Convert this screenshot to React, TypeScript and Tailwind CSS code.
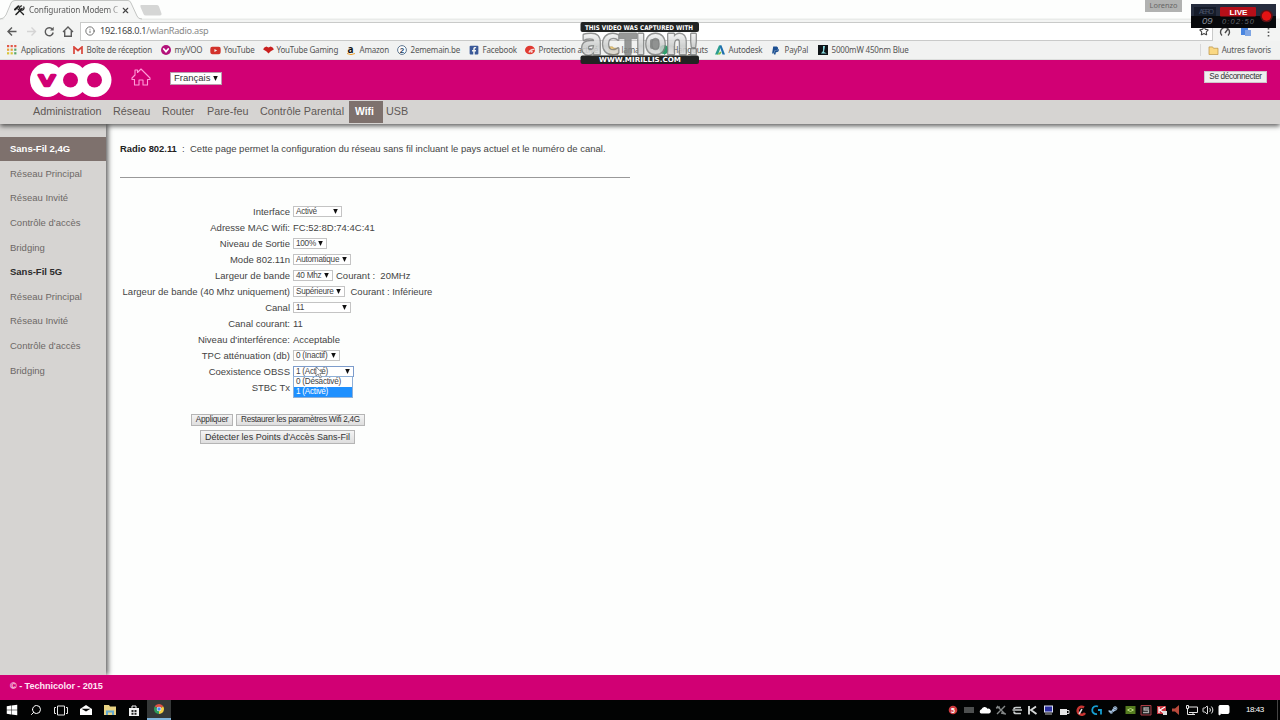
import React from "react";
import {
  FaFacebookSquare,
  FaPaypal,
  FaSteamSymbol,
  FaWindows,
  FaYoutube,
} from "react-icons/fa";
import { Info, MessageSquare, Search, Star, Volume2, X } from "lucide-react";

type SelectProps = {
  value: string;
  className: string;
  active?: boolean;
};

const Select = ({ value, className, active }: SelectProps) => (
  <div
    className={`flex h-[11px] items-center justify-between border bg-white pr-[3px] pl-[2px] text-[8.2px] leading-[9px] tracking-[-0.25px] whitespace-nowrap text-[#444] ${
      active ? "border-[#7d9ccb]" : "border-[#c4c4c4]"
    } ${className}`}
  >
    <span>{value}</span>
    <Arrow />
  </div>
);

const Arrow = () => (
  <svg viewBox="0 0 5 5" className="h-[5px] w-[5px] shrink-0">
    <path d="M0.200 0h4.600L2.500 5z" fill="#111" />
  </svg>
);

const Folder = () => (
  <svg viewBox="0 0 12 10" className="h-[9px] w-[11px] shrink-0">
    <path
      d="M1 1h4l1 1.5h5V9.5H1z"
      fill="#fad883"
      stroke="#b99345"
      strokeWidth="0.8"
    />
  </svg>
);

const bookmarks = [
  {
    label: "Applications",
    box: "w-[65.5px]",
    icon: (
      <svg viewBox="0 0 10 10" className="size-[10px]">
        {["#e0584a", "#e8a13a", "#d9c53a"].map((color, row) =>
          [0, 1, 2].map((col) => (
            <rect
              key={`${row}-${col}`}
              x={col * 3.6}
              y={row * 3.6}
              width="2.2"
              height="2.2"
              fill={col === 2 && row > 0 ? "#59a869" : color}
            />
          ))
        )}
      </svg>
    ),
  },
  {
    label: "Boîte de réception",
    box: "w-[88px]",
    icon: (
      <svg viewBox="0 0 10 8" className="h-[8px] w-[10px]">
        <rect width="10" height="8" fill="#f5f5f5" />
        <path
          d="M1 8V1l4 3.5L9 1v7"
          fill="none"
          stroke="#d8453a"
          strokeWidth="1.7"
        />
      </svg>
    ),
  },
  {
    label: "myVOO",
    box: "w-[49px]",
    icon: (
      <svg viewBox="0 0 10 10" className="size-[10px]">
        <circle cx="5" cy="5" r="5" fill="#b3127a" />
        <path
          d="M2.8 4L5 6.6 7.2 4"
          fill="none"
          stroke="#fff"
          strokeWidth="1.8"
          strokeLinecap="round"
        />
      </svg>
    ),
  },
  {
    label: "YouTube",
    box: "w-[53px]",
    icon: <FaYoutube className="size-[11px] text-[#d2322b]" />,
  },
  {
    label: "YouTube Gaming",
    box: "w-[83px]",
    icon: (
      <svg viewBox="0 0 12 9" className="h-[8px] w-[11px]">
        <path
          d="M1 2l2.5-1.5L6 1.6 8.500.5 11 2l1 2-3.500 2L6 8.500 3.500 6 0 4z"
          fill="#c9201f"
        />
      </svg>
    ),
  },
  {
    label: "Amazon",
    box: "w-[51px]",
    icon: (
      <svg viewBox="0 0 10 11" className="h-[11px] w-[10px] overflow-visible">
        <text
          x="1.500"
          y="7.500"
          fontSize="10"
          fontWeight="700"
          fontFamily="Open Sans, sans-serif"
          fill="#111"
        >
          a
        </text>
        <path d="M1 8.5q4 2.300 8 0" fill="none" stroke="#f0a030" />
      </svg>
    ),
  },
  {
    label: "2ememain.be",
    box: "w-[72px]",
    icon: (
      <svg viewBox="0 0 10 10" className="size-[10px]">
        <circle
          cx="5"
          cy="5"
          r="4.4"
          fill="#fff"
          stroke="#5d7590"
          strokeWidth="1"
        />
        <text
          x="2.800"
          y="7.800"
          fontSize="8"
          fontWeight="700"
          fontFamily="Liberation Sans, sans-serif"
          fill="#29435f"
        >
          2
        </text>
      </svg>
    ),
  },
  {
    label: "Facebook",
    box: "w-[56px]",
    icon: <FaFacebookSquare className="size-[10px] text-[#3b5998]" />,
  },
  {
    label: "Protection activé",
    box: "w-[83px]",
    icon: (
      <svg viewBox="0 0 10 10" className="size-[10px]">
        <ellipse cx="5" cy="5" rx="5" ry="4.300" fill="#e03a32" />
        <path
          d="M4 7.500Q5 4 9.500 4.500"
          stroke="#f5d9d7"
          strokeWidth="1.300"
          fill="none"
        />
        <circle cx="6.500" cy="6.500" r="1.200" fill="#f5d9d7" />
      </svg>
    ),
  },
  {
    label: "lama",
    box: "w-[51px]",
    icon: <Folder />,
  },
  {
    label: "Hangouts",
    box: "w-[55px]",
    icon: (
      <svg viewBox="0 0 10 10" className="size-[10px]">
        <circle cx="5" cy="4.500" r="4.500" fill="#2e9e6b" />
        <path d="M5 8l0 2 3-2z" fill="#2e9e6b" />
      </svg>
    ),
  },
  {
    label: "Autodesk",
    box: "ml-[1px] w-[56px]",
    icon: (
      <svg viewBox="0 0 10 10" className="size-[10px]">
        <path d="M0 9.500L4 0.500h2.500L3 9.500z" fill="#2a9d8f" />
        <path d="M4.500 0.500h2L10 9.500H7.500z" fill="#1d6fae" />
        <path d="M2 9.500l3.500-3 1 1-1.500 2z" fill="#7bc043" />
      </svg>
    ),
  },
  {
    label: "PayPal",
    box: "w-[47px]",
    icon: <FaPaypal className="size-[9px] text-[#1c4f91]" />,
  },
  {
    label: "5000mW 450nm Blue",
    box: "w-[100px]",
    icon: (
      <svg viewBox="0 0 10 10" className="size-[10px]">
        <rect width="10" height="10" fill="#101418" />
        <path d="M5 1h2L6 7l3 1.500H3L5 6z" fill="#8adbe0" />
      </svg>
    ),
  },
];

const menu = [
  { label: "Administration", className: "w-[80px]" },
  { label: "Réseau", className: "w-[49px]" },
  { label: "Router", className: "w-[45px]" },
  { label: "Pare-feu", className: "w-[53px]" },
  { label: "Contrôle Parental", className: "w-[89px]" },
];

const sideLinks = [
  { label: "Sans-Fil 2,4G", selected: true },
  { label: "Réseau Principal" },
  { label: "Réseau Invité" },
  { label: "Contrôle d'accès" },
  { label: "Bridging" },
  { label: "Sans-Fil 5G", title: true },
  { label: "Réseau Principal" },
  { label: "Réseau Invité" },
  { label: "Contrôle d'accès" },
  { label: "Bridging" },
];

const rows: { label: string; field?: React.ReactNode }[] = [
  { label: "Interface", field: <Select value="Activé" className="w-[49px]" /> },
  {
    label: "Adresse MAC Wifi:",
    field: <span className="pt-[2px]">FC:52:8D:74:4C:41</span>,
  },
  {
    label: "Niveau de Sortie",
    field: <Select value="100%" className="w-[34px]" />,
  },
  {
    label: "Mode 802.11n",
    field: <Select value="Automatique" className="w-[58px]" />,
  },
  {
    label: "Largeur de bande",
    field: (
      <>
        <Select value="40 Mhz" className="w-[40px]" />
        <span className="ml-[3px] pt-[2px]">Courant :&nbsp; 20MHz</span>
      </>
    ),
  },
  {
    label: "Largeur de bande (40 Mhz uniquement)",
    field: (
      <>
        <Select value="Supérieure" className="w-[52px]" />
        <span className="ml-[5.5px] pt-[2px]">Courant : Inférieure</span>
      </>
    ),
  },
  { label: "Canal", field: <Select value="11" className="w-[58px]" /> },
  { label: "Canal courant:", field: <span className="pt-[2px]">11</span> },
  {
    label: "Niveau d'interférence:",
    field: <span className="pt-[2px]">Acceptable</span>,
  },
  {
    label: "TPC atténuation (db)",
    field: <Select value="0 (Inactif)" className="w-[47px]" />,
  },
  {
    label: "Coexistence OBSS",
    field: (
      <div className="relative">
        <Select value="1 (Activé)" className="w-[61px]" active />
        <div className="absolute top-[10px] left-0 z-10 w-[60px] border border-[#8fb0d8] bg-white text-[8.2px] leading-[10px] tracking-[-0.25px] text-[#444]">
          <div className="h-[10px] pl-[2px]">0 (Désactivé)</div>
          <div className="h-[10px] bg-[#1e90ff] pl-[2px] text-white">
            1 (Activé)
          </div>
        </div>
        <svg
          viewBox="0 0 9 13"
          className="absolute top-0 left-[22px] z-20 h-[13px] w-[9px]"
        >
          <path
            d="M1 1v9l2.200-2 1.600 4 1.600-.7-1.600-3.800H8z"
            fill="#fff"
            stroke="#666"
            strokeWidth="0.7"
          />
        </svg>
      </div>
    ),
  },
  { label: "STBC Tx" },
];

const Tab = () => (
  <div className="relative flex h-5 w-full items-start bg-[#fdfefd]">
    <svg
      viewBox="0 0 1280 20"
      className="absolute inset-0 h-5 w-full"
      fill="none"
    >
      <path d="M0 18.500H1280V20H0z" fill="#e9ebe9" />
      <path
        d="M3 20Q6 18 7 15L11 3Q12 0.500 15 0.500H128Q130 0.500 131 3L137 16Q138 19 142 20z"
        fill="#f5f6f5"
      />
      <path
        d="M0 19Q4 19 6 15L11 3Q12 0.500 15 0.500H128Q130 0.500 131 3L137 16Q138 19 142 19"
        stroke="#c3c5c3"
      />
      <path
        d="M141 5h16q1.500 0 2 1.500l2.500 7q.5 2-1.500 2h-14q-2 0-2.500-1.500l-3-7Q140 5 141 5z"
        fill="#d5d6d5"
      />
    </svg>
    <div className="relative flex h-[20px] items-center pl-[14px]">
      <svg
        viewBox="0 0 11 11"
        className="size-[11px]"
        fill="none"
        stroke="#222"
        strokeLinecap="round"
      >
        <path d="M2 9.500L8 3.500" strokeWidth="1.600" />
        <path d="M9.800 2A2.200 2.200 0 1 1 7.500 0.800" strokeWidth="1.300" />
        <path d="M9.500 9.500L4 4" strokeWidth="1.400" />
        <path d="M1 4.500L4.500 1.200" strokeWidth="2" />
      </svg>
      <span className="ml-1 w-[91px] bg-gradient-to-r from-[#555] from-88% to-[#bbb] to-98% bg-clip-text text-[8.2px] tracking-[-0.15px] whitespace-nowrap text-transparent">
        Configuration Modem C
      </span>
      <X className="ml-[1px] size-[9px] text-[#444]" strokeWidth={3} />
    </div>
    <div className="absolute top-0 left-[1145px] flex h-[12px] w-[37px] items-center justify-center bg-[#b1b2b1] text-[7.4px] text-[#666]">
      Lorenzo
    </div>
  </div>
);

const Toolbar = () => (
  <div className="flex h-[21px] items-center bg-[#f3f4f3] pl-[6px]">
    <svg
      viewBox="0 0 74 20"
      className="h-5 w-[74px]"
      fill="none"
      stroke="#5a5a5a"
      strokeWidth="1.400"
    >
      <path d="M10.500 10.500H2M6 6.500L2 10.500l4 4" />
      <path d="M21 10.500h8.500M25.500 6.500l4 4-4 4" stroke="#d4d4d4" />
      <path d="M46.500 8.300A4 4 0 1 0 47.200 11.500" />
      <path d="M47.700 5.800v3.600h-3.600z" fill="#5a5a5a" stroke="none" />
      <path d="M57 11L62 6l5 5M58.700 10v5.300h6.600V10" />
    </svg>
    <div className="mt-px flex h-[19px] w-[1133px] items-center border border-[#c9cac9] bg-white pl-[4px]">
      <Info className="size-[10px] text-[#5a5a5a]" strokeWidth={2} />
      <span className="ml-[5px] text-[9.2px] tracking-[-0.28px] text-[#444]">
        192.168.0.1<span className="text-[#888]">/wlanRadio.asp</span>
      </span>
      <Star
        className="mr-[3px] ml-auto size-[10px] text-[#444]"
        strokeWidth={2.5}
      />
    </div>
    <svg viewBox="0 0 60 16" className="h-4 w-[60px]" fill="none">
      <path
        d="M9 12.500A4.500 4.500 0 1 1 15 12.500M12 10l3-4"
        stroke="#4a4a4a"
        strokeWidth="1.400"
      />
      <rect x="28" y="4" width="7" height="8" fill="#4a86e0" />
      <rect x="32" y="7" width="6" height="6" fill="#7fa6e4" />
      <path
        d="M55.500 5v1.500M55.500 8.500V10M55.500 12v1.500"
        stroke="#555"
        strokeWidth="1.600"
      />
    </svg>
  </div>
);

const Bookmarks = () => (
  <div className="flex h-[19px] items-center border-b border-[#dcdedc] bg-[#f1f2f1] pl-[7px] text-[8px] tracking-[-0.18px] text-[#555]">
    {bookmarks.map(({ label, box, icon }) => (
      <div key={label} className={`flex shrink-0 items-center ${box}`}>
        <span className="flex w-[14px] shrink-0 items-center">{icon}</span>
        <span className="whitespace-nowrap">{label}</span>
      </div>
    ))}
    <div className="ml-auto flex h-[12px] items-center border-l border-[#d8d8d8] pr-[9px] pl-[7px]">
      <Folder />
      <span className="ml-[3px] whitespace-nowrap">Autres favoris</span>
    </div>
  </div>
);

// Capture watermark floating over the address bar
const Watermark = () => (
  <svg
    viewBox="0 0 120 44"
    className="absolute top-[21px] left-[580px] z-30 h-[44px] w-[120px]"
    fontFamily="DejaVu Sans, sans-serif"
  >
    <defs>
      <linearGradient id="metal" x1="0" y1="0" x2="0" y2="1">
        <stop offset="0.2" stopColor="#ffffff" />
        <stop offset="0.6" stopColor="#c9cbca" />
        <stop offset="1" stopColor="#f3f3f3" />
      </linearGradient>
    </defs>
    <text
      x="1"
      y="33"
      fontSize="27"
      fontWeight="700"
      textLength="118"
      lengthAdjust="spacingAndGlyphs"
      fill="url(#metal)"
      stroke="#7f8180"
      strokeWidth="3"
      strokeLinejoin="round"
      paintOrder="stroke"
      opacity="0.85"
    >
      <tspan fontSize="35">a</tspan>C<tspan fill="#858786">T</tspan>IO
      <tspan fontSize="35">n</tspan>!
    </text>
    <rect x="70" y="18" width="9" height="10" rx="2" fill="#7f8180" opacity="0.85" />
    <rect x="0.500" y="1" width="118.500" height="10" rx="2" fill="#222423" />
    <rect x="0.500" y="34.500" width="118.500" height="8.500" rx="2" fill="#222423" />
    <g fontWeight="700" fill="#fff">
      <text
        x="5"
        y="8.500"
        fontSize="6.500"
        textLength="108"
        lengthAdjust="spacingAndGlyphs"
      >
        THIS VIDEO WAS CAPTURED WITH
      </text>
      <text
        x="19"
        y="41.300"
        fontSize="7"
        textLength="82"
        lengthAdjust="spacingAndGlyphs"
      >
        WWW.MIRILLIS.COM
      </text>
    </g>
  </svg>
);

const LiveRecorder = () => (
  <svg
    viewBox="0 0 85 24"
    className="absolute top-[4px] left-[1191px] z-30 h-[24px] w-[85px]"
    fontFamily="Liberation Sans, sans-serif"
  >
    <rect width="85" height="24" fill="#07080b" />
    <rect width="85" height="12" fill="#252c3d" />
    <rect x="3" y="3" width="22" height="9" fill="#151b29" />
    <text x="8" y="10" fontSize="7" textLength="15" fill="#485266">
      AERO
    </text>
    <text x="11" y="19.500" fontSize="9.500" fontStyle="italic" fill="#8a909b">
      09
    </text>
    <rect x="29" y="3" width="36" height="9.500" rx="1" fill="#b50f19" />
    <text
      x="38.500"
      y="10.700"
      fontSize="8"
      fontWeight="700"
      textLength="18"
      lengthAdjust="spacingAndGlyphs"
      fill="#fff"
    >
      LIVE
    </text>
    <text
      x="31"
      y="19.500"
      fontSize="7.500"
      fontStyle="italic"
      textLength="32"
      fill="#63676f"
    >
      0:02:50
    </text>
    <circle cx="75.500" cy="12" r="6.300" fill="#5b1115" />
    <circle cx="75.500" cy="12" r="4.700" fill="#e51313" />
  </svg>
);

const VooLogo = () => (
  <svg viewBox="0 0 82 34" className="h-[34px] w-[82px]">
    <circle cx="17" cy="17" r="17" fill="#fff" />
    <circle cx="40.500" cy="17" r="17" fill="#fff" />
    <circle cx="64.500" cy="17" r="17" fill="#fff" />
    <circle cx="40.500" cy="17" r="7.500" fill="#d10074" />
    <circle cx="64.500" cy="17" r="7.500" fill="#d10074" />
    <text
      x="9"
      y="22.500"
      fontSize="21"
      textLength="16"
      lengthAdjust="spacingAndGlyphs"
      fontFamily="Liberation Sans, sans-serif"
      fill="#d10074"
      stroke="#d10074"
      strokeWidth="2.400"
      strokeLinejoin="round"
    >
      v
    </text>
  </svg>
);

const Header = () => (
  <div className="relative z-20 flex h-10 items-start bg-[#d10074] pl-[30px]">
    <div className="mt-[3px]">
      <VooLogo />
    </div>
    <svg
      viewBox="0 0 20 18"
      className="mt-[8px] ml-[19px] h-[18px] w-[20px]"
      fill="none"
      stroke="#ff9bd8"
      strokeWidth="1.100"
      strokeLinejoin="round"
    >
      <path d="M1 10L4 7V2h2.500v2.500L10 1l9 9v1.500h-2.500V17H12v-5H8v5H3.500v-5.500H1z" />
    </svg>
    <div className="mt-[12px] ml-[19px] flex h-[13px] w-[52px] items-center justify-between border border-[#b9a0ae] bg-white pr-[3px] pl-[3px] text-[9.5px] text-[#333]">
      <span>Français</span>
      <Arrow />
    </div>
    <button className="mt-[11px] mr-[13px] ml-auto h-[12px] w-[63px] border border-[#d0c5cb] bg-[#efefef] text-[8.2px] leading-[10px] tracking-[-0.35px] whitespace-nowrap text-[#333]">
      Se déconnecter
    </button>
  </div>
);

const Menu = () => (
  <div className="relative z-10 flex h-6 items-start bg-[#d6d4d2] pl-[33px] text-[10.8px] leading-[23px] text-[#5f5956] shadow-[0_2px_5px_rgba(0,0,0,0.65)]">
    {menu.map((item) => (
      <span key={item.label} className={`whitespace-nowrap ${item.className}`}>
        {item.label}
      </span>
    ))}
    <span className="mt-px h-[22px] w-[34px] bg-[#7e716d] pr-[3px] text-center text-[10.4px] leading-[21px] font-bold text-white">
      Wifi
    </span>
    <span className="ml-[3px]">USB</span>
  </div>
);

const Sidebar = () => (
  <div className="relative z-[5] w-[106px] bg-[#d6d4d2] pt-[12.8px] shadow-[2px_0_5px_rgba(0,0,0,0.65)]">
    {sideLinks.map(({ label, selected, title }, index) => (
      <div
        key={index}
        className={`flex h-[24.65px] items-center pl-[10px] text-[9.5px] whitespace-nowrap ${
          selected
            ? "bg-[#7e716d] font-bold text-white"
            : title
              ? "font-bold text-[#2b2b2b]"
              : "text-[#6d6866]"
        }`}
      >
        {label}
      </div>
    ))}
  </div>
);

const buttonStyle =
  "block border border-[#b5b5b5] bg-gradient-to-b from-[#f4f4f4] to-[#dedede] whitespace-nowrap text-[#333]";

const Content = () => (
  <div className="flex-1 pt-[19px] pl-[14px]">
    <div className="flex h-[13px] items-center text-[9.5px] whitespace-nowrap text-[#444]">
      <span className="w-[62px] text-[9.4px] font-bold text-[#222]">
        Radio 802.11
      </span>
      <span className="w-[8px]">:</span>
      <span>
        Cette page permet la configuration du réseau sans fil incluant le pays
        actuel et le numéro de canal.
      </span>
    </div>
    <div className="mt-[21px] h-px w-[510px] bg-[#999]" />
    <div className="mt-[25px] text-[9.5px] text-[#444]">
      {rows.map(({ label, field }) => (
        <div key={label} className="flex h-4 items-center whitespace-nowrap">
          <span className="w-[170px] shrink-0 pt-[2px] text-right">
            {label}
          </span>
          <div className="ml-[3px] flex items-center">{field}</div>
        </div>
      ))}
    </div>
    <div className="mt-[19px] ml-[71px] flex gap-[3px] text-[8.2px] leading-[10px]">
      <button className={`${buttonStyle} h-[12px] w-[42px] tracking-[-0.25px]`}>
        Appliquer
      </button>
      <button
        className={`${buttonStyle} h-[12px] w-[129px] tracking-[-0.28px]`}
      >
        Restaurer les paramètres Wifi 2,4G
      </button>
    </div>
    <button
      className={`${buttonStyle} mt-[4px] ml-[80px] h-[14px] w-[155px] text-[9px] leading-[11px]`}
    >
      Détecter les Points d'Accès Sans-Fil
    </button>
  </div>
);

const Taskbar = () => (
  <div className="flex h-5 items-center justify-between bg-[#020303] text-white">
    <div className="flex h-5 items-center pl-[6px]">
      <FaWindows className="size-[12px]" />
      <Search className="ml-[12px] size-[12px] -scale-x-100" />
      <svg
        viewBox="0 0 14 11"
        className="ml-[12px] h-[11px] w-[14px]"
        fill="none"
        stroke="#e8e8e8"
      >
        <path d="M3.500 1h7v9h-7zM2 2.500H0.500v6H2M12 2.500h1.500v6H12" />
      </svg>
      <svg viewBox="0 0 12 10" className="ml-[12px] h-[10px] w-[12px]">
        <path d="M0 4l6-4 6 4v6H0z" fill="#fff" />
        <path d="M1.500 3.800h9L6 6.500z" fill="#050505" />
      </svg>
      <svg viewBox="0 0 12 10" className="ml-[12px] h-[10px] w-[12px]">
        <path d="M0 0h5l1 1.500h6V10H0z" fill="#e8d383" />
        <path d="M2 10V5.500h8V10H8V7.500H4V10z" fill="#65a9cf" />
      </svg>
      <svg viewBox="0 0 10 11" className="ml-[13px] h-[11px] w-[10px]">
        <path d="M0 3h10v8H0z" fill="#f2f2f2" />
        <path d="M3 3V1h4v2" fill="none" stroke="#f2f2f2" />
        <path
          d="M2.500 5h2v2h-2zM5.500 5h2v2h-2zM2.500 7.800h2v2h-2zM5.500 7.800h2v2h-2z"
          fill="#222"
        />
      </svg>
      <div className="ml-[8px] flex h-5 w-[24px] items-center justify-center border-b-2 border-[#80b5dc] bg-[#353838]">
        <svg viewBox="0 0 10 10" className="size-[10px]">
          <path d="M5 5L0.670 2.500A5 5 0 0 1 9.330 2.500z" fill="#dd5144" />
          <path d="M5 5l4.330-2.500A5 5 0 0 1 5 10z" fill="#f5cf45" />
          <path d="M5 5v5A5 5 0 0 1 .67 2.500z" fill="#2d9d5c" />
          <circle cx="5" cy="5" r="2.300" fill="#f2f2f2" />
          <circle cx="5" cy="5" r="1.700" fill="#4c8bf5" />
        </svg>
      </div>
    </div>
    <div className="flex h-5 items-center">
      <Tray />
      <span className="ml-[16px] w-[31px] text-[8px] tracking-[-0.45px]">
        18:43
      </span>
      <div className="mr-[2px] h-5 w-px bg-[#444]" />
    </div>
  </div>
);

const Tray = () => (
  <div className="flex items-center">
    <svg viewBox="0 0 172 12" className="h-[12px] w-[172px]" fill="none">
      <circle cx="5" cy="6" r="4.300" fill="#cf3a3f" />
      <text x="3" y="8.600" fontSize="7" fontWeight="700" fill="#fff">
        5
      </text>
      <path d="M16 3h10v6H16z" fill="#4d4f4f" />
      <path
        d="M33 9.500a2.300 2.300 0 0 1 .5-4.300 3.300 3.300 0 0 1 6-.5 2.500 2.500 0 0 1 1.500 4.800z"
        fill="#fff"
      />
      <path
        d="M49 2l8 8M57 2l-8 8M48 4l4-1M53 9l5 1"
        stroke="#858989"
        strokeWidth="1.400"
      />
      <path
        d="M73 3.500h-5q-2 0-2 1.500M64.500 6H74M66 7.500q0 2 2 2h5"
        stroke="#c8cccc"
        strokeWidth="1.700"
      />
      <path
        d="M81 2v8.500M88 2.500L83 6l5.500 4"
        stroke="#d6d8d8"
        strokeWidth="1.900"
      />
      <path d="M96 1.500h9v7h-9z" fill="#dce0f4" />
      <path d="M97 2.500h7v5h-7z" fill="#2a2fa0" />
      <path d="M97 10h7" stroke="#bbb" />
      <path d="M112 5h7v6h-7z" fill="#e6e6e6" />
      <path d="M119 6.500h2v3h-2" stroke="#d9d9d9" />
      <path
        d="M136 3.500A4 4 0 1 0 137 9"
        stroke="#c93532"
        strokeWidth="2.500"
      />
      <path d="M131 10l3-5" stroke="#ddd" strokeWidth="1.500" />
      <path
        d="M150 2.500a4 4 0 1 0-1 7.500M150 6h3v4.500"
        stroke="#169ed1"
        strokeWidth="1.800"
      />
    </svg>
    <FaSteamSymbol className="-ml-[12px] size-[10px] text-[#a7c3e2]" />
    <svg viewBox="0 0 56 12" className="ml-[7px] h-[12px] w-[56px]" fill="none">
      <path d="M0.500 2h10v8h-10z" fill="#557d20" />
      <path d="M2.500 6q3-3 6 0-3 3-6 0z" stroke="#b7d77d" />
      <path d="M16 1.500h10v9.500H16z" fill="#181818" stroke="#a93942" />
      <path
        d="M24 4h-5v2h4.500v2.500H18"
        stroke="#aaa"
        strokeWidth="1.300"
      />
      <path d="M32 2h9v8h-9z" fill="#c8343e" />
      <path d="M34 3v6M40 3l-5 3 4 3" stroke="#fff" strokeWidth="1.300" />
      <path d="M38 7h4v4h-4z" fill="#ddd" />
      <path d="M47 4.500h3l4-3.500v10l-4-3.500h-3z" fill="#b94a3c" />
    </svg>
    <svg
      viewBox="0 0 12 10"
      className="ml-[5px] h-[10px] w-[12px]"
      fill="none"
      stroke="#e5e5e5"
    >
      <path d="M3 2h8.500v5.500H3M0.500 0.500h2v3h-2zM1.500 4v5.500H9M7 7.500v2" />
    </svg>
    <Volume2 className="ml-[4px] size-[12px]" strokeWidth={1.8} />
    <MessageSquare className="ml-[4px] size-[12px]" fill="#fff" />
  </div>
);

const App = () => {
  return (
    <div className="relative flex h-[720px] w-[1280px] flex-col overflow-hidden bg-[#fdfefd] font-['Liberation_Sans',sans-serif]">
      <div className="font-['Noto_Sans',sans-serif]">
        <Tab />
        <Toolbar />
        <Bookmarks />
      </div>
      <Header />
      <Menu />
      <div className="flex min-h-0 flex-1">
        <Sidebar />
        <Content />
      </div>
      <div className="relative z-10 flex h-[25px] items-center bg-[#d10074] pb-[2px] pl-[10px] text-[9.1px] font-bold tracking-[-0.05px] text-[#ffe6f5]">
        © - Technicolor - 2015
      </div>
      <Taskbar />
      <Watermark />
      <LiveRecorder />
    </div>
  );
};

export default App;
